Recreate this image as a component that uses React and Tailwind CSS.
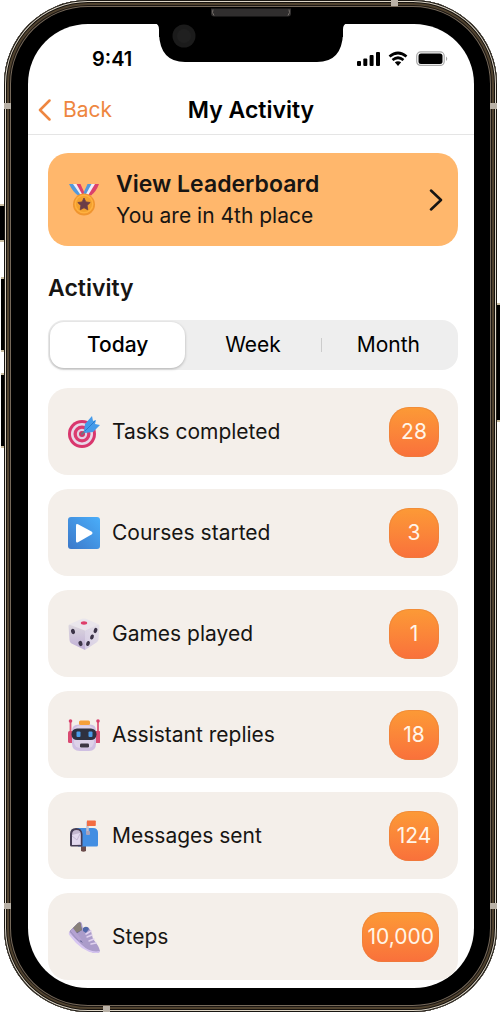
import { useState } from "react";

const PERIODS = ["Today", "Week", "Month"];

function MedalIcon() {
  return (
    <svg className="size-8 shrink-0" viewBox="0 0 32 32" aria-hidden="true">
      <path d="M1 0h5l9 10-5 1.500Q5 8 1 0Z" fill="#5299dc" />
      <path d="M5 0h4l7 10-3 1.500Z" fill="#f1eff8" />
      <path d="M8.500 0h4l4 9-2 2Z" fill="#dc416c" />
      <path d="M31 0h-5l-8 10 5 1.500Q28 8 31 0Z" fill="#dc416c" />
      <path d="M27 0h-4l-7 10 4 1.500Z" fill="#f1eff8" />
      <path d="M23.500 0h-4l-4 9 2 2Z" fill="#5299dc" />
      <circle cx="16" cy="20.500" r="11" fill="#f0952f" />
      <circle cx="16" cy="20" r="9.500" fill="#ffb13f" />
      <circle cx="16" cy="20" r="8" fill="#f3a12f" />
      <path d="m16 14 1.900 3.900 4.300.6-3.100 3 .7 4.300-3.800-2-3.800 2 .7-4.300-3.100-3 4.300-.6Z" fill="#6a3c47" stroke="#6a3c47" strokeWidth=".8" />
    </svg>
  );
}

function TargetIcon() {
  return (
    <svg className="size-8 shrink-0" viewBox="0 0 32 32" aria-hidden="true">
      <circle cx="14" cy="18" r="14" fill="#d9366d" />
      <circle cx="14" cy="18" r="11" fill="#e8d8e9" />
      <circle cx="14" cy="18" r="8.500" fill="#dc3a70" />
      <circle cx="14" cy="18" r="5.200" fill="#e3cfe3" />
      <circle cx="14" cy="18" r="3" fill="#cf3569" />
      <path d="m14 18 10-10" stroke="#6c7684" strokeWidth="1.800" strokeLinecap="round" />
      <path d="m16 15 1-7 7-8 1 5 3-1-1 4 5 1-7 7-8 1Z" fill="#459bea" />
      <path d="m17 15 10-10" stroke="#287bcb" strokeWidth="1" />
    </svg>
  );
}

function PlayIcon() {
  return (
    <svg className="size-8 shrink-0" viewBox="0 0 32 32" aria-hidden="true">
      <defs>
        <linearGradient id="playFill" x1="0" y1="1" x2="1" y2="0">
          <stop stopColor="#3c78c9" />
          <stop offset="1" stopColor="#4aaefa" />
        </linearGradient>
      </defs>
      <rect width="32" height="32" rx="3" fill="url(#playFill)" />
      <path d="M8 8.500Q8 6.500 10 7.300l13.500 7.200q2 1.500 0 3L10 25.200q-2 1-2-1.200Z" fill="#fff" />
    </svg>
  );
}

function DiceIcon() {
  return (
    <svg className="size-8 shrink-0" viewBox="0 0 32 32" aria-hidden="true">
      <defs>
        <linearGradient id="diceLeft" x1="0" y1="0" x2="0" y2="1">
          <stop stopColor="#dcd7de" />
          <stop offset="1" stopColor="#bfaed6" />
        </linearGradient>
        <linearGradient id="diceRight" x1="1" y1="0" x2="0" y2="1">
          <stop stopColor="#e6e2e8" />
          <stop offset="1" stopColor="#d5cbe4" />
        </linearGradient>
      </defs>
      <path d="M1 6.500 14 .8q2-.8 4 0l13 5.700-14 6Z" fill="#eae6ec" />
      <path d="M.5 8q0-1.500 1.500-1.300l15 5.800v19.500L3.500 25.500Q1.500 24.500 1.500 22Z" fill="url(#diceLeft)" />
      <path d="m17 12.500 13-6q1.500 0 1.500 1.500l-1 13.500q0 1.500-2 3L17 32Z" fill="url(#diceRight)" />
      <ellipse cx="16" cy="5" rx="3.200" ry="1.700" fill="#de3f6b" />
      <g fill="#3c3448">
        <ellipse cx="5" cy="13.500" rx="2" ry="2.700" transform="rotate(-18 5 13.500)" />
        <ellipse cx="12.500" cy="25.500" rx="2" ry="2.700" transform="rotate(-18 12.500 25.500)" />
        <ellipse cx="27.500" cy="12.500" rx="1.800" ry="2.700" transform="rotate(20 27.500 12.500)" />
        <ellipse cx="24" cy="19" rx="1.800" ry="2.600" transform="rotate(20 24 19)" />
        <ellipse cx="20" cy="25.500" rx="1.800" ry="2.600" transform="rotate(20 20 25.500)" />
      </g>
    </svg>
  );
}

function RobotIcon() {
  return (
    <svg className="size-8 shrink-0" viewBox="0 0 32 32" aria-hidden="true">
      <path d="M2.500 2v22M30 2v22" stroke="#df5578" strokeWidth="1.800" />
      <circle cx="2.500" cy="2" r="1.800" fill="#d9406d" />
      <circle cx="30" cy="2" r="1.800" fill="#d9406d" />
      <rect x="0" y="12" width="6" height="12" rx="1.500" fill="#d94a72" />
      <rect x="26.500" y="12" width="6" height="12" rx="1.500" fill="#d94a72" />
      <path d="M11 5.500h11q6 0 6 6v13q0 7.500-7 7.500h-9q-8 0-8-7.500v-13q0-6 7-6Z" fill="#cfbfe2" />
      <rect x="6" y="6.500" width="20" height="22.500" rx="6" fill="#ddd2e9" />
      <rect x="11" y="1.500" width="11" height="4.500" rx="1.500" fill="#f5a03b" />
      <rect x="3.500" y="9.500" width="25" height="11.500" rx="5.500" fill="#2e3140" />
      <rect x="8.500" y="12.500" width="4" height="5.500" rx="1" fill="#4c9ce9" />
      <rect x="20.500" y="12.500" width="4" height="5.500" rx="1" fill="#4c9ce9" />
      <rect x="12" y="24.500" width="9" height="4" rx="1.300" fill="#3c3544" />
    </svg>
  );
}

function MailboxIcon() {
  return (
    <svg className="size-8 shrink-0" viewBox="0 0 32 32" aria-hidden="true">
      <path d="M13 23h5v8q-2.500 1.500-5 0Z" fill="#6b4c4b" />
      <path d="M8 8h17q5 0 5 5v12q0 1.500-1.500 1.500H10Z" fill="#438ee2" />
      <path d="M2 14q0-6 6-6t6.500 6v11.500q0 1-1 1H3.500Q2 26.500 2 25Z" fill="#453d55" />
      <path d="M4 15q0-5 4.500-5t4.500 5v10H4Z" fill="#c3b7d0" />
      <path d="m4 15 8-2v11q-3 1-8 1Z" fill="#e2d9ee" />
      <path d="m4 16 5 4 3-6" fill="none" stroke="#c4b8d4" />
      <path d="M19.500 1.500V14" stroke="#c6c0ce" strokeWidth="2.500" />
      <rect x="18" y="11" width="4" height="4" rx="1" fill="#aaa3ba" />
      <path d="M19 .5h8q.8 0 .8.800v4q0 .700-.8.700h-8Z" fill="#f36d43" />
    </svg>
  );
}

function ShoeIcon() {
  return (
    <svg className="size-8 shrink-0" viewBox="0 0 32 32" aria-hidden="true">
      <path d="M1 11 11 1q2-1 3 2l1 5 5-2 3 4 2 8q6 7 7 12 0 2-5 2Q17 31 1 11Z" fill="#ab9cca" />
      <path d="M1 11q-1 2 1 4 12 16 25 17 5 0 5-2-10 2-18-6Q6 17 1 11Z" fill="#d6c5f1" />
      <path d="m2 10 8-8q3-2 3 3l1 4-6 4 7 9-5-3Z" fill="#636293" />
      <path d="m5 7 5-5q3-2 3 3l1 4-6 3Z" fill="#888078" />
      <path d="m2 10 3-3 9 12-3 1Z" fill="#b4a2d2" />
      <path d="M15 7q4-3 6 1l-3 4-3-2Z" fill="#5067a8" />
      <path d="m18 13 5-3M19 16l5-2M21 20l5-2M23 23l5-1" stroke="#e0d2ef" strokeWidth="1.500" strokeLinecap="round" />
    </svg>
  );
}

const STATS = [
  { label: "Tasks completed", value: "28", icon: TargetIcon },
  { label: "Courses started", value: "3", icon: PlayIcon },
  { label: "Games played", value: "1", icon: DiceIcon },
  { label: "Assistant replies", value: "18", icon: RobotIcon },
  { label: "Messages sent", value: "124", icon: MailboxIcon },
  { label: "Steps", value: "10,000", icon: ShoeIcon },
];

function StatusBar() {
  return (
    <div className="flex h-16 items-center justify-between pl-16 pr-[26px] pt-[6px]">
      <span className="text-xl leading-6 font-semibold">9:41</span>
      <div className="flex items-center gap-2">
        <svg className="h-4 w-[23px]" viewBox="0 0 23 16" aria-hidden="true">
          <rect y="10" width="4" height="5" rx="1" />
          <rect x="6.300" y="7.500" width="4" height="7.500" rx="1" />
          <rect x="12.600" y="4" width="4" height="11" rx="1" />
          <rect x="19" y="1" width="4" height="14" rx="1" />
        </svg>
        <svg className="h-4 w-5" viewBox="0 0 20 16" aria-hidden="true">
          <path d="M1.500 5.500Q10-1.500 18.500 5.500M4.500 9q5.500-4.500 11 0" fill="none" stroke="#000" strokeWidth="2.700" />
          <path d="M6.800 11.300q3.200-2.200 6.400 0L10 15Z" />
        </svg>
        <svg className="h-4 w-8" viewBox="0 0 32 16" aria-hidden="true">
          <rect x=".7" y=".9" width="27.500" height="13.500" rx="4" fill="none" stroke="#aaa" strokeWidth="1.200" />
          <rect x="2.500" y="2.500" width="24" height="10.500" rx="2.500" />
          <path d="M30 5.500q2.500 2 0 4.500Z" fill="#aaa" />
        </svg>
      </div>
    </div>
  );
}

function StatCard({ label, value, icon: Icon }) {
  return (
    <li className="flex h-[87px] items-center gap-3 rounded-[20px] bg-[#f4efea] pr-[19px] pl-5">
      <Icon />
      <span className="flex-1 text-[21px] leading-7">{label}</span>
      <span className="flex h-[50px] min-w-[50px] items-center justify-center rounded-[20px] bg-linear-to-b from-[#fc9a36] to-[#f9703b] px-[5px] text-[21px] leading-7 text-[#fff5e8] shadow-[inset_0_0_0_1px_#e8803a80]">
        {value}
      </span>
    </li>
  );
}

// Hardware details that lie over the frame: notch, speaker, buttons, antenna bands
function PhoneHardware() {
  return (
    <div className="pointer-events-none absolute inset-0">
      <div className="absolute top-[204px] -left-1 h-[38px] w-1 border-y-2 border-[#c9bda0] bg-black" />
      <div className="absolute top-[277px] -left-[3px] h-[75px] w-[3px] border-y-2 border-[#c9bda0] bg-black" />
      <div className="absolute top-[373px] -left-[3px] h-[75px] w-[3px] border-y-2 border-[#c9bda0] bg-black" />
      <div className="absolute top-[303px] -right-[3px] h-[119px] w-[3px] border-y-2 border-[#c9bda0] bg-black" />
      <div className="absolute top-[103px] left-0 h-[6px] w-[7px] bg-[#b9b1a6]" />
      <div className="absolute top-[103px] right-0 h-[6px] w-[7px] bg-[#b9b1a6]" />
      <div className="absolute bottom-[103px] left-0 h-[6px] w-[7px] bg-[#b9b1a6]" />
      <div className="absolute right-0 bottom-[103px] h-[6px] w-[7px] bg-[#b9b1a6]" />
      <div className="absolute top-0 right-[99px] h-[6px] w-[7px] bg-[#b9b1a6]" />
      <div className="absolute bottom-0 left-[99px] h-[6px] w-[7px] bg-[#b9b1a6]" />
      <svg className="absolute top-[7px] left-1/2 h-14 w-[200px] -translate-x-1/2" viewBox="0 0 200 56" aria-hidden="true">
        <path d="M0 16.500h4q4 .5 4 6v4Q9 55 34 55h132q25 0 26-28.500v-4q0-5.500 4-6h4V16Z" fill="#000" />
        <path d="M8 10h184v20H8Z" fill="#000" />
        <circle cx="33" cy="29" r="11.500" fill="#1b1b1b" />
        <circle cx="33" cy="29" r="7" fill="#202020" />
        <path d="M60 1.500h80v5q0 3-3 3H63q-3 0-3-3Z" fill="#302e2e" />
        <path d="M62 2.500q-1.500 3 1 6M138 2.500q1.500 3-1 6" fill="none" stroke="#77716c" />
      </svg>
    </div>
  );
}

function App() {
  const [period, setPeriod] = useState("Today");

  return (
    <div className="overflow-hidden bg-white font-['Inter',sans-serif] text-[#171513]">
      <div className="relative mr-[3px] ml-1 rounded-[84px] bg-black pt-6 pr-[23px] pb-6 pl-6 shadow-[inset_0_0_0_1px_#1a1712,inset_0_0_0_2px_#ded6c7,inset_0_0_0_3px_#15110d,inset_0_0_0_5px_#51432f,inset_0_0_0_6px_#1c1713,inset_0_0_0_7px_#76695a]">
        <div className="overflow-hidden rounded-[60px] bg-white pb-2">
          <header className="border-b border-[#e5e5e5] text-black">
            <StatusBar />
            <div className="grid h-[46px] grid-cols-[1fr_auto_1fr] items-center px-[10px] pb-[2px]">
              <a href="#back" className="flex items-center gap-3 text-[21px] leading-7 text-[#ee8640]">
                <svg className="h-[22px] w-[13px]" viewBox="0 0 13 22" fill="none" stroke="currentColor" strokeWidth="2.500" strokeLinecap="round" strokeLinejoin="round" aria-hidden="true">
                  <path d="M11.500 1.500 2 11l9.500 9.500" />
                </svg>
                Back
              </a>
              <h1 className="text-[23px] leading-7 font-semibold">My Activity</h1>
            </div>
          </header>

          <main className="pt-[18px] pr-4 pl-5">
            <a href="#leaderboard" className="flex h-[93px] items-center gap-4 rounded-[20px] bg-[#ffb76c] pr-[15px] pl-5">
              <MedalIcon />
              <span className="flex-1">
                <span className="block text-[23px] leading-8 font-semibold">View Leaderboard</span>
                <span className="block text-[21px] leading-8">You are in 4th place</span>
              </span>
              <svg className="h-[22px] w-[14px]" viewBox="0 0 14 22" fill="none" stroke="currentColor" strokeWidth="2.500" strokeLinecap="round" strokeLinejoin="round" aria-hidden="true">
                <path d="m2 1.500 10 9.500-10 9.500" />
              </svg>
            </a>

            <h2 className="pt-[26px] pb-4 text-[23px] leading-8 font-semibold">Activity</h2>

            <div className="flex h-[50px] rounded-2xl bg-[#eee] p-0.5 text-[21px] leading-6 text-black">
              {PERIODS.map((name) => (
                <button
                  key={name}
                  type="button"
                  aria-pressed={period === name}
                  onClick={() => setPeriod(name)}
                  className={
                    period === name
                      ? "flex-1 basis-0 rounded-[14px] bg-white font-medium shadow-[0_1px_3px_#0004]"
                      : "relative flex-1 basis-0 last:before:absolute last:before:top-4 last:before:left-0 last:before:h-[14px] last:before:w-px last:before:bg-[#ccc]"
                  }
                >
                  {name}
                </button>
              ))}
            </div>

            <ul className="flex flex-col gap-[14px] pt-[18px]">
              {STATS.map((stat) => (
                <StatCard key={stat.label} {...stat} />
              ))}
            </ul>
          </main>
        </div>
        <PhoneHardware />
      </div>
    </div>
  );
}

export default App;
